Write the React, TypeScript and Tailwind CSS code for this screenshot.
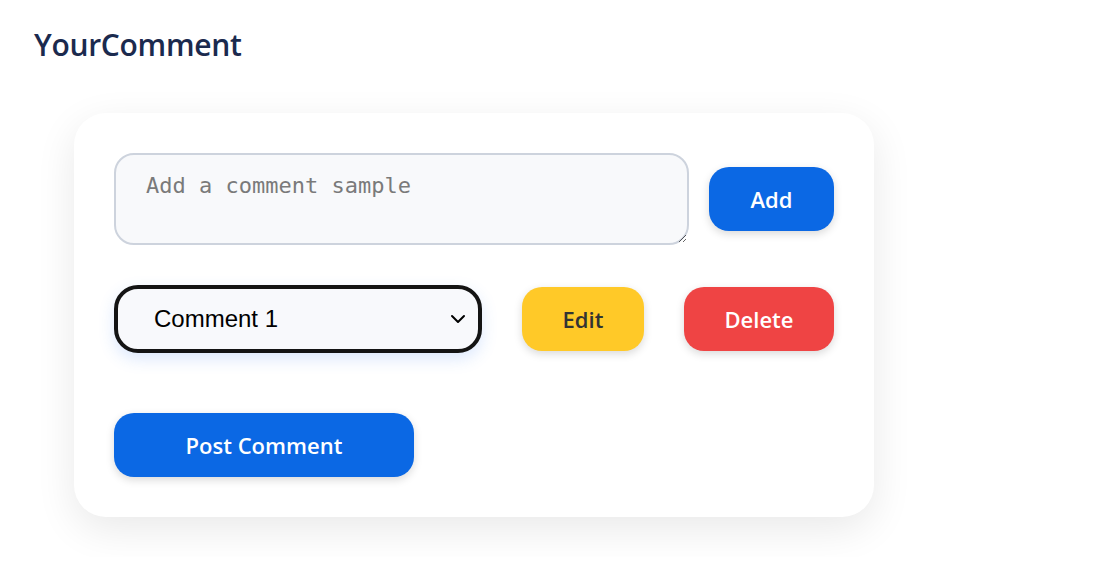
import { ChevronDown } from "lucide-react";

const ui = { fontFamily: '"Open Sans", "Noto Sans", sans-serif' };

export default function App() {
  return (
    <div className="min-h-[576px] bg-white px-[34px] pt-[25px]" style={ui}>
      <h1 className="text-[30px] font-semibold leading-[40px] text-[#1b2a4e] tracking-[-0.3px]">
        YourComment
      </h1>

      <div className="mt-[8px] w-[880px] overflow-hidden p-10">
        <div className="flex w-[800px] flex-col rounded-[32px] bg-white p-10 shadow-[0_12px_40px_rgba(0,0,0,0.09)]">
          <div className="flex items-center gap-5">
            <textarea
              placeholder="Add a comment sample"
              className="h-[92px] w-[575px] rounded-[20px] border-2 border-[#cdd3dd] bg-[#f8f9fb] px-[30px] py-[17px] text-[22px] leading-[28px] placeholder:text-[#7a7a7a] focus:outline-none"
              style={{ fontFamily: '"DejaVu Sans Mono", monospace' }}
            />
            <button className="h-16 w-[125px] rounded-[20px] bg-[#0b68e4] text-[22px] font-semibold text-white shadow-[0_3px_8px_rgba(0,0,0,0.15)]">
              Add
            </button>
          </div>

          <div className="mt-10 flex items-center gap-10">
            <div className="relative h-[68px] w-[368px] rounded-[24px] border-4 border-[#141414] bg-[#f8f9fc] shadow-[0_6px_16px_rgba(59,130,246,0.18)]">
              <select
                className="h-full w-full appearance-none bg-transparent pl-[36px] text-[24px] text-black focus:outline-none"
                style={{ fontFamily: '"Liberation Sans", Arial, sans-serif' }}
                defaultValue="1"
              >
                <option value="1">Comment 1</option>
                <option value="2">Comment 2</option>
              </select>
              <ChevronDown
                className="pointer-events-none absolute right-[8px] top-1/2 h-6 w-6 -translate-y-1/2 text-black"
                strokeWidth={2}
              />
            </div>
            <button className="h-16 w-[122px] rounded-[20px] bg-[#ffc928] text-[22px] font-semibold text-[#333] shadow-[0_3px_8px_rgba(0,0,0,0.15)]">
              Edit
            </button>
            <button className="h-16 w-[150px] rounded-[20px] bg-[#ef4444] text-[22px] font-semibold text-white shadow-[0_3px_8px_rgba(0,0,0,0.15)]">
              Delete
            </button>
          </div>

          <div className="mt-[60px]">
            <button className="h-16 w-[300px] rounded-[20px] bg-[#0b68e4] text-[22px] font-semibold text-white shadow-[0_3px_8px_rgba(0,0,0,0.15)]">
              Post Comment
            </button>
          </div>
        </div>
      </div>
    </div>
  );
}
